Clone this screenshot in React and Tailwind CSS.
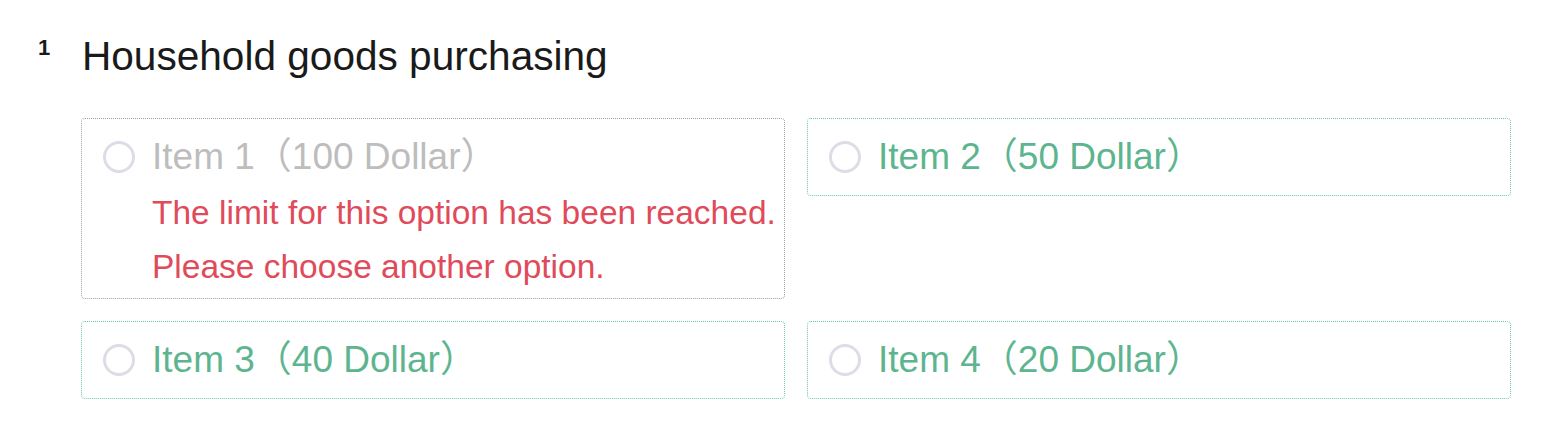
import React from "react";

const options = [
  { id: 1, label: "Item 1（100 Dollar）", full: true },
  { id: 2, label: "Item 2（50 Dollar）", full: false },
  { id: 3, label: "Item 3（40 Dollar）", full: false },
  { id: 4, label: "Item 4（20 Dollar）", full: false },
];

const Option = ({ item }) => (
  <div
    className={`rounded-[4px] border border-dotted pl-[21px] pr-[10px] pt-[18px] ${
      item.full ? "border-[#9e9e9e] pb-[4px]" : "border-[#6cc5a5] pb-[18px]"
    }`}
  >
    <div className="flex items-center h-[40px]">
      <span className="w-[32px] h-[32px] rounded-full border-[3px] border-[#dcdde6] shrink-0"></span>
      <span
        className={`ml-[17px] text-[37px] leading-[40px] whitespace-nowrap ${
          item.full ? "text-[#bdbdbd]" : "text-[#5db590]"
        }`}
      >
        {item.label}
      </span>
    </div>
    {item.full && (
      <div className="ml-[49px] mt-[9px] text-[33.5px] leading-[54px] text-[#df4b5b] whitespace-nowrap">
        <p>The limit for this option has been reached.</p>
        <p>Please choose another option.</p>
      </div>
    )}
  </div>
);

export default function App() {
  return (
    <div
      className="w-full h-[438px] bg-white pl-[38px] pr-[43px] pt-[32px]"
      style={{ fontFamily: '"Liberation Sans", "Noto Sans CJK SC", sans-serif' }}
    >
      <div className="flex items-start">
        <span className="w-[44px] mt-[1px] text-[22px] leading-[30px] font-bold text-[#1a1a1a]">1</span>
        <h1 className="text-[40.6px] leading-[48px] text-[#1a1a1a]">Household goods purchasing</h1>
      </div>
      <div className="ml-[43px] mt-[38px] grid grid-cols-2 gap-[22px] items-start">
        {options.map((item) => (
          <Option key={item.id} item={item} />
        ))}
      </div>
    </div>
  );
}
